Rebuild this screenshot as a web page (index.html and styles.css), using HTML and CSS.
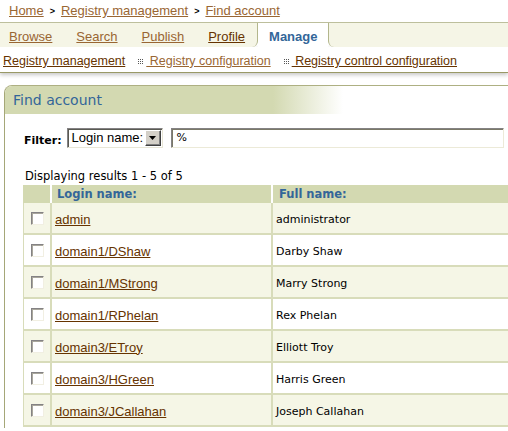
FILE: index.html
```html
<!DOCTYPE html>
<html>
<head>
<meta charset="utf-8">
<title>Find account</title>
<link rel="stylesheet" href="styles.css">
</head>
<body>
<div class="crumbs"><a href="#">Home</a><span class="sep">&gt;</span><a href="#">Registry management</a><span class="sep">&gt;</span><a href="#">Find account</a></div>

<div class="tabs">
  <div class="tabs-left">
    <a href="#">Browse</a>
    <a href="#">Search</a>
    <a href="#">Publish</a>
    <a href="#" class="dark">Profile</a>
  </div>
  <div class="tab-current">Manage</div>
  <div class="tabs-right"></div>
</div>

<div class="subnav">
  <a href="#" class="dark">Registry management</a>
  <svg class="dots" width="5" height="5" viewBox="0 0 5 5"><g fill="#555"><rect x="0" y="0" width="1" height="1"/><rect x="2" y="0" width="1" height="1"/><rect x="4" y="0" width="1" height="1"/><rect x="0" y="2" width="1" height="1"/><rect x="2" y="2" width="1" height="1"/><rect x="4" y="2" width="1" height="1"/><rect x="0" y="4" width="1" height="1"/><rect x="2" y="4" width="1" height="1"/><rect x="4" y="4" width="1" height="1"/></g></svg>
  <a href="#">&nbsp;Registry configuration</a>
  <svg class="dots" width="5" height="5" viewBox="0 0 5 5"><g fill="#555"><rect x="0" y="0" width="1" height="1"/><rect x="2" y="0" width="1" height="1"/><rect x="4" y="0" width="1" height="1"/><rect x="0" y="2" width="1" height="1"/><rect x="2" y="2" width="1" height="1"/><rect x="4" y="2" width="1" height="1"/><rect x="0" y="4" width="1" height="1"/><rect x="2" y="4" width="1" height="1"/><rect x="4" y="4" width="1" height="1"/></g></svg>
  <a href="#" class="dark">&nbsp;Registry control configuration</a>
</div>

<div class="panel">
  <div class="panel-head">Find account</div>
  <div class="panel-body">
    <div class="filter">
      <span class="filter-label">Filter:</span>
      <div class="select">
        <span class="select-text">Login name:</span>
        <span class="select-btn"><svg width="7" height="4" viewBox="0 0 7 4"><polygon points="0,0 7,0 3.5,4" fill="#000"/></svg></span>
      </div>
      <div class="textbox">%</div>
    </div>
    <div class="count">Displaying results 1 - 5 of 5</div>
    <table class="grid">
      <thead>
        <tr><th class="c-check"></th><th class="c-login">Login name:</th><th class="c-full">Full name:</th></tr>
      </thead>
      <tbody>
        <tr class="odd"><td class="c-check"><span class="cb"></span></td><td class="c-login"><a href="#">admin</a></td><td class="c-full">administrator</td></tr>
        <tr><td class="c-check"><span class="cb"></span></td><td class="c-login"><a href="#">domain1/DShaw</a></td><td class="c-full">Darby Shaw</td></tr>
        <tr class="odd"><td class="c-check"><span class="cb"></span></td><td class="c-login"><a href="#">domain1/MStrong</a></td><td class="c-full">Marry Strong</td></tr>
        <tr><td class="c-check"><span class="cb"></span></td><td class="c-login"><a href="#">domain1/RPhelan</a></td><td class="c-full">Rex Phelan</td></tr>
        <tr class="odd"><td class="c-check"><span class="cb"></span></td><td class="c-login"><a href="#">domain3/ETroy</a></td><td class="c-full">Elliott Troy</td></tr>
        <tr><td class="c-check"><span class="cb"></span></td><td class="c-login"><a href="#">domain3/HGreen</a></td><td class="c-full">Harris Green</td></tr>
        <tr class="odd"><td class="c-check"><span class="cb"></span></td><td class="c-login"><a href="#">domain3/JCallahan</a></td><td class="c-full">Joseph Callahan</td></tr>
      </tbody>
    </table>
  </div>
</div>
</body>
</html>
```

FILE: styles.css
```css
html, body {
  margin: 0;
  padding: 0;
  background: #fff;
}
body {
  width: 508px;
  height: 431px;
  overflow: hidden;
  font-family: "DejaVu Sans", Verdana, sans-serif;
  color: #000;
}
a {
  text-decoration: underline;
  color: #996633;
}
a.dark {
  color: #663300;
}

/* breadcrumb */
.crumbs {
  font: 13px/15px "Liberation Sans", Arial, sans-serif;
  padding: 3px 0 4px 9px;
  height: 15px;
  white-space: nowrap;
}
.crumbs .sep {
  font: bold 9px "Liberation Sans", Arial, sans-serif;
  margin: 0 6px;
  position: relative;
  top: -1px;
}

/* tabs */
.tabs {
  display: flex;
  height: 24px;
  border-top: 1px solid #BDBF9C;
  font: 13px/21px "Liberation Sans", Arial, sans-serif;
}
.tabs-left {
  display: flex;
  background: #F5F5E6;
  border-right: 1px solid #B3B68C;
  border-bottom-right-radius: 6px;
}
.tabs-left a {
  display: block;
  padding: 3px 12px 0;
}
.tabs-left a:first-child {
  padding-left: 9px;
}
.tab-current {
  padding: 3px 11px 0;
  font-weight: bold;
  color: #336699;
  background: #fff;
}
.tabs-right {
  flex: 1;
  background: #F5F5E6;
  border-left: 1px solid #B3B68C;
  border-bottom-left-radius: 6px;
}

/* sub navigation */
.subnav {
  display: flex;
  align-items: center;
  height: 15px;
  padding: 7px 0 3px 3px;
  font: 12.5px/15px "Liberation Sans", Arial, sans-serif;
  white-space: nowrap;
  border-bottom: 1px solid #999966;
  box-shadow: 0 2px 4px rgba(0, 0, 0, 0.22);
}
.subnav .dots {
  margin: 0 3px 0 13px;
  flex: none;
}

/* panel */
.panel {
  margin: 12px 0 0 4px;
  height: 342px;
  border-left: 1px solid #A5A778;
  border-top: 1px solid #AEB082;
  border-top-left-radius: 8px;
}
.panel-head {
  height: 27px;
  padding: 1px 0 0 8px;
  font-size: 14px;
  line-height: 27px;
  color: #336699;
  background: linear-gradient(to right, #D3D9B1 0, #D3D9B1 268px, rgba(255, 255, 255, 0) 338px);
  border-top-left-radius: 7px;
}
.panel-body {
  padding-left: 19px;
}

/* filter */
.filter {
  display: flex;
  align-items: center;
  height: 20px;
  margin-top: 14px;
}
.filter-label {
  font-weight: bold;
  font-size: 11px;
  margin-right: 5px;
  padding-top: 4px;
}
.select {
  box-sizing: border-box;
  width: 96px;
  height: 20px;
  display: flex;
  align-items: center;
  justify-content: space-between;
  border: 1px solid;
  border-color: #848284 #E8E6D6 #E8E6D6 #848284;
  box-shadow: inset 1px 1px 0 #5A5A52;
  background: #fff;
  padding: 0 1px 0 4px;
}
.select-text {
  font: 13px/16px "Liberation Sans", Arial, sans-serif;
}
.select-btn {
  box-sizing: border-box;
  width: 16px;
  height: 16px;
  background: #D4D0C8;
  border: 1px solid;
  border-color: #fff #404040 #404040 #fff;
  box-shadow: inset -1px -1px 0 #808080;
  display: flex;
  align-items: center;
  justify-content: center;
}
.textbox {
  box-sizing: border-box;
  width: 333px;
  height: 20px;
  margin-left: 8px;
  border: 1px solid;
  border-color: #848284 #ECEAD8 #ECEAD8 #848284;
  box-shadow: inset 1px 1px 0 #7B7968;
  padding: 0 0 0 5px;
  font-size: 11px;
  line-height: 18px;
}

/* count */
.count {
  font-size: 11.5px;
  line-height: 14px;
  margin: 21px 0 2px 1px;
  white-space: nowrap;
}

/* grid */
.grid {
  border-collapse: separate;
  border-spacing: 0;
  margin-left: -1px;
  width: 490px;
}
.grid th {
  height: 18px;
  padding: 0;
  background: #D3D9B1;
  color: #336699;
  font-size: 11.5px;
  font-weight: bold;
  text-align: left;
  border-right: 2px solid #fff;
  line-height: 18px;
}
.grid th.c-login {
  padding-left: 5px;
}
.grid th.c-full {
  padding-left: 6px;
  border-right: 0;
}
.grid td {
  height: 28px;
  padding: 2px 0 0;
  border-bottom: 2px solid #D8DCBA;
  border-right: 2px solid #D8DCBA;
  vertical-align: middle;
  font-size: 11px;
}
.grid tr.odd td {
  background: #F5F6E6;
}
.grid .c-check {
  width: 27px;
}
.grid td.c-check {
  border-left: 1px solid #D8DCBA;
  width: 26px;
  padding-left: 0;
  text-align: center;
}
.grid .c-login {
  width: 214px;
}
.grid td.c-login {
  padding-left: 3px;
  width: 216px;
}
.grid td.c-login a {
  font: 13px "Liberation Sans", Arial, sans-serif;
  color: #663300;
}
.grid td.c-full {
  padding-left: 3px;
  border-right: 0;
}
.cb {
  display: inline-block;
  box-sizing: border-box;
  width: 13px;
  height: 13px;
  vertical-align: middle;
  background: #fff;
  border: 1px solid;
  border-color: #848284 #F1EFE2 #F1EFE2 #848284;
  box-shadow: inset 1px 1px 0 #A9A79C;
  position: relative;
  top: -1px;
}
```
